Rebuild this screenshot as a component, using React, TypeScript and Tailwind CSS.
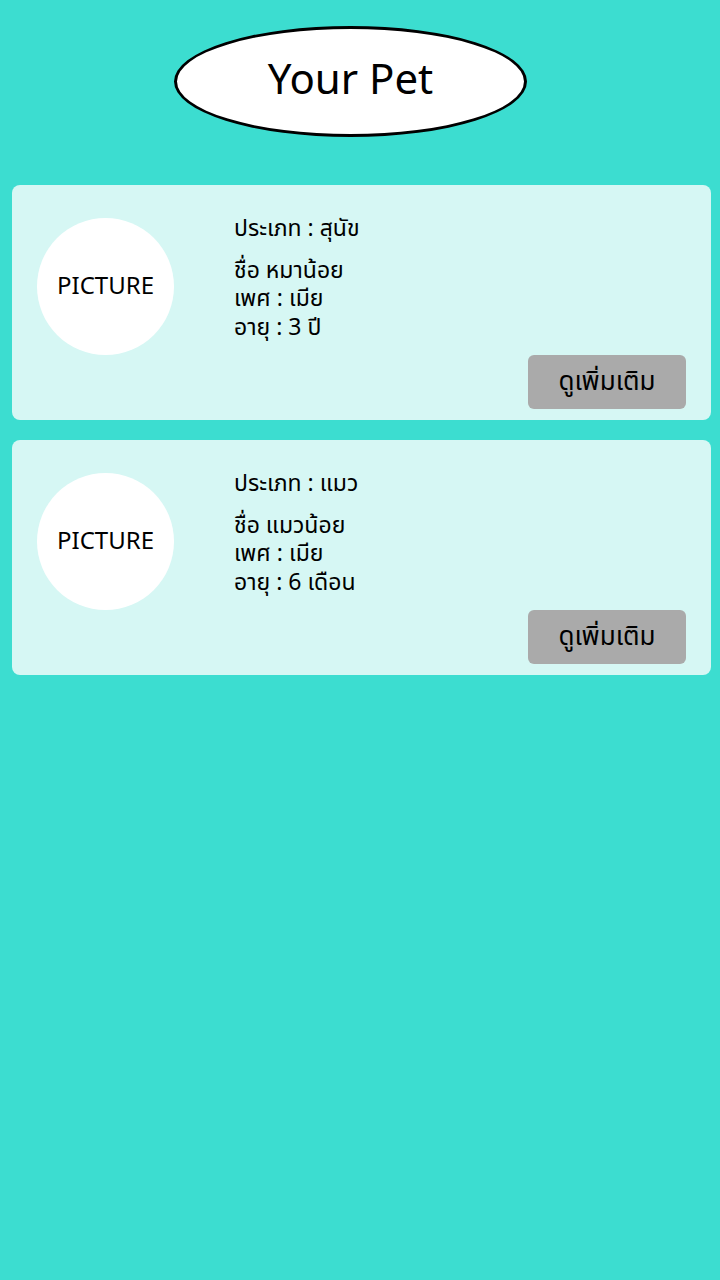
const pets = [
  { type: "สุนัข", name: "หมาน้อย", sex: "เมีย", age: "3 ปี" },
  { type: "แมว", name: "แมวน้อย", sex: "เมีย", age: "6 เดือน" },
];

function PetCard({ pet }: { pet: (typeof pets)[number] }) {
  return (
    <div className="flex flex-col rounded-lg bg-[#d6f7f4] pb-[11px] pl-[25px] pr-[25px] pt-[33px]">
      <div className="flex items-start">
        <div className="flex h-[137px] w-[137px] shrink-0 items-center justify-center rounded-full bg-white text-[24px] text-black">
          PICTURE
        </div>
        <div className="ml-[60px] -mt-[3px] flex flex-col text-[23px] leading-[28.5px] text-black">
          <p className="mb-[13px]">ประเภท : {pet.type}</p>
          <p>ชื่อ {pet.name}</p>
          <p>เพศ : {pet.sex}</p>
          <p>อายุ : {pet.age}</p>
        </div>
      </div>
      <div className="flex justify-end">
        <button className="flex h-[54px] w-[158px] items-center justify-center rounded-md bg-[#aaaaaa] text-[26px] text-black">
          ดูเพิ่มเติม
        </button>
      </div>
    </div>
  );
}

export default function App() {
  return (
    <div
      className="min-h-[1280px] w-full bg-[#3cddd0] pl-3 pr-[9px] pt-[26px]"
      style={{ fontFamily: '"Noto Sans Thai", "Noto Sans", "DejaVu Sans", sans-serif' }}
    >
      {/* ==== HEADER ==== */}
      <div className="flex justify-center">
        <div className="mr-[22px] flex h-[111px] w-[353px] items-center justify-center rounded-[50%] border-[3px] border-black bg-white">
          <h1 className="text-[42px] text-black">Your Pet</h1>
        </div>
      </div>
      {/* ==== CARDS ==== */}
      <div className="mt-[48px] flex flex-col gap-5">
        {pets.map((p) => (
          <PetCard key={p.name} pet={p} />
        ))}
      </div>
    </div>
  );
}
